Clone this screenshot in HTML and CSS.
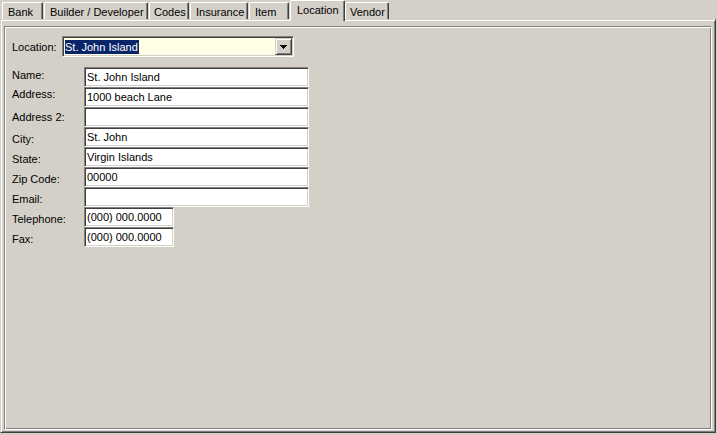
FILE: index.html
```html
<!DOCTYPE html>
<html>
<head>
<meta charset="utf-8">
<link rel="stylesheet" href="styles.css">
</head>
<body>
<div class="tabs">
  <div class="tab w-bank">Bank</div>
  <div class="tab w-builder">Builder / Developer</div>
  <div class="tab w-codes">Codes</div>
  <div class="tab w-insurance">Insurance</div>
  <div class="tab w-item">Item</div>
  <div class="tab tab-active">Location</div>
  <div class="tab w-vendor">Vendor</div>
</div>
<div class="panel">
  <div class="frame">
    <div class="loc-row">
      <span class="loc-label">Location:</span>
      <div class="combo">
        <div class="combo-text"><span class="sel">St. John Island</span></div>
        <div class="combo-btn">
          <svg width="7" height="4" viewBox="0 0 7 4"><rect x="0" y="0" width="7" height="1"/><rect x="1" y="1" width="5" height="1"/><rect x="2" y="2" width="3" height="1"/><rect x="3" y="3" width="1" height="1"/></svg>
        </div>
      </div>
    </div>
    <div class="fields">
      <div class="row"><span class="lbl lbl-up">Name:</span><div class="field wide">St. John Island</div></div>
      <div class="row"><span class="lbl lbl-up2">Address:</span><div class="field wide">1000 beach Lane</div></div>
      <div class="row"><span class="lbl lbl-mid">Address 2:</span><div class="field wide"></div></div>
      <div class="row"><span class="lbl">City:</span><div class="field wide">St. John</div></div>
      <div class="row"><span class="lbl">State:</span><div class="field wide">Virgin Islands</div></div>
      <div class="row"><span class="lbl">Zip Code:</span><div class="field wide">00000</div></div>
      <div class="row"><span class="lbl">Email:</span><div class="field wide"></div></div>
      <div class="row"><span class="lbl">Telephone:</span><div class="field narrow">(000) 000.0000</div></div>
      <div class="row"><span class="lbl">Fax:</span><div class="field narrow">(000) 000.0000</div></div>
    </div>
  </div>
</div>
</body>
</html>
```
FILE: styles.css
```css
html, body {
  margin: 0;
  padding: 0;
}
body {
  width: 717px;
  height: 435px;
  overflow: hidden;
  background: #d4d0c8;
  font-family: "Liberation Sans", Arial, sans-serif;
  font-size: 11px;
  color: #000;
}

/* Tabs */
.tabs {
  display: flex;
  align-items: flex-end;
  height: 19px;
  padding-left: 2px;
}
.tab {
  box-sizing: border-box;
  height: 17px;
  margin-right: 1px;
  padding: 3px 0 0 5px;
  line-height: 13px;
  white-space: nowrap;
  border-top: 1px solid #fff;
  border-left: 1px solid #fff;
  border-right: 1px solid #404040;
  border-radius: 2px 2px 0 0;
  box-shadow: inset -1px 0 #808080;
  background: #d4d0c8;
}
.w-bank { width: 41px; }
.w-builder { width: 104px; }
.w-codes { width: 40px; padding-left: 4px; }
.w-insurance { width: 58px; }
.w-item { width: 40px; }
.w-vendor { width: 44px; padding-left: 4px; }
.tab-active {
  position: relative;
  z-index: 1;
  width: 55px;
  height: 21px;
  margin-right: 0;
  margin-bottom: -2px;
  padding-left: 6px;
}

/* Panel */
.panel {
  box-sizing: border-box;
  width: 716px;
  height: 414px;
  border: 1px solid;
  border-color: #d4d0c8 #404040 #404040 #d4d0c8;
  box-shadow: inset 1px 1px #fff, inset -1px -1px #808080;
  padding: 6px 3px 2px 3px;
}
.frame {
  box-sizing: border-box;
  height: 100%;
  border: 1px solid;
  border-color: #808080 #fff #fff #808080;
  box-shadow: inset 1px 1px #fff, inset -1px -1px #808080;
  padding: 9px 0 0 7px;
}

/* Location combo */
.loc-row {
  display: flex;
  align-items: flex-start;
  height: 21px;
}
.loc-label {
  width: 50px;
  padding-top: 4px;
  line-height: 14px;
}
.combo {
  box-sizing: border-box;
  display: flex;
  width: 232px;
  height: 21px;
  padding: 1px;
  border: 1px solid;
  border-color: #808080 #fff #fff #808080;
  box-shadow: inset 1px 1px #404040, inset -1px -1px #d4d0c8;
  background: #ffffe8;
}
.combo-text {
  flex: 1;
  padding: 2px 0 0 1px;
}
.sel {
  display: inline-block;
  line-height: 14px;
  padding: 0 1px 0 0;
  background: #0a246a;
  color: #fff;
}
.combo-btn {
  box-sizing: border-box;
  width: 17px;
  height: 17px;
  display: flex;
  align-items: center;
  justify-content: center;
  padding-top: 1px;
  border: 1px solid;
  border-color: #d4d0c8 #404040 #404040 #d4d0c8;
  box-shadow: inset 1px 1px #fff, inset -1px -1px #808080;
  background: #d4d0c8;
}
.combo-btn svg {
  display: block;
  fill: #000;
}

/* Fields */
.fields {
  margin-top: 10px;
  display: flex;
  flex-direction: column;
}
.row {
  display: flex;
  align-items: flex-start;
  height: 20px;
}
.lbl {
  width: 72px;
  padding-top: 4px;
  line-height: 16px;
  white-space: nowrap;
}
.lbl-up { padding-top: 0; }
.lbl-up2 { padding-top: 0; margin-top: -1px; }
.lbl-mid { padding-top: 2px; }
.field {
  box-sizing: border-box;
  height: 20px;
  padding: 1px 2px;
  line-height: 16px;
  white-space: nowrap;
  overflow: hidden;
  background: #fff;
  border: 1px solid;
  border-color: #808080 #fff #fff #808080;
  box-shadow: inset 1px 1px #404040, inset -1px -1px #d4d0c8;
}
.wide { width: 225px; }
.narrow { width: 90px; }
```
